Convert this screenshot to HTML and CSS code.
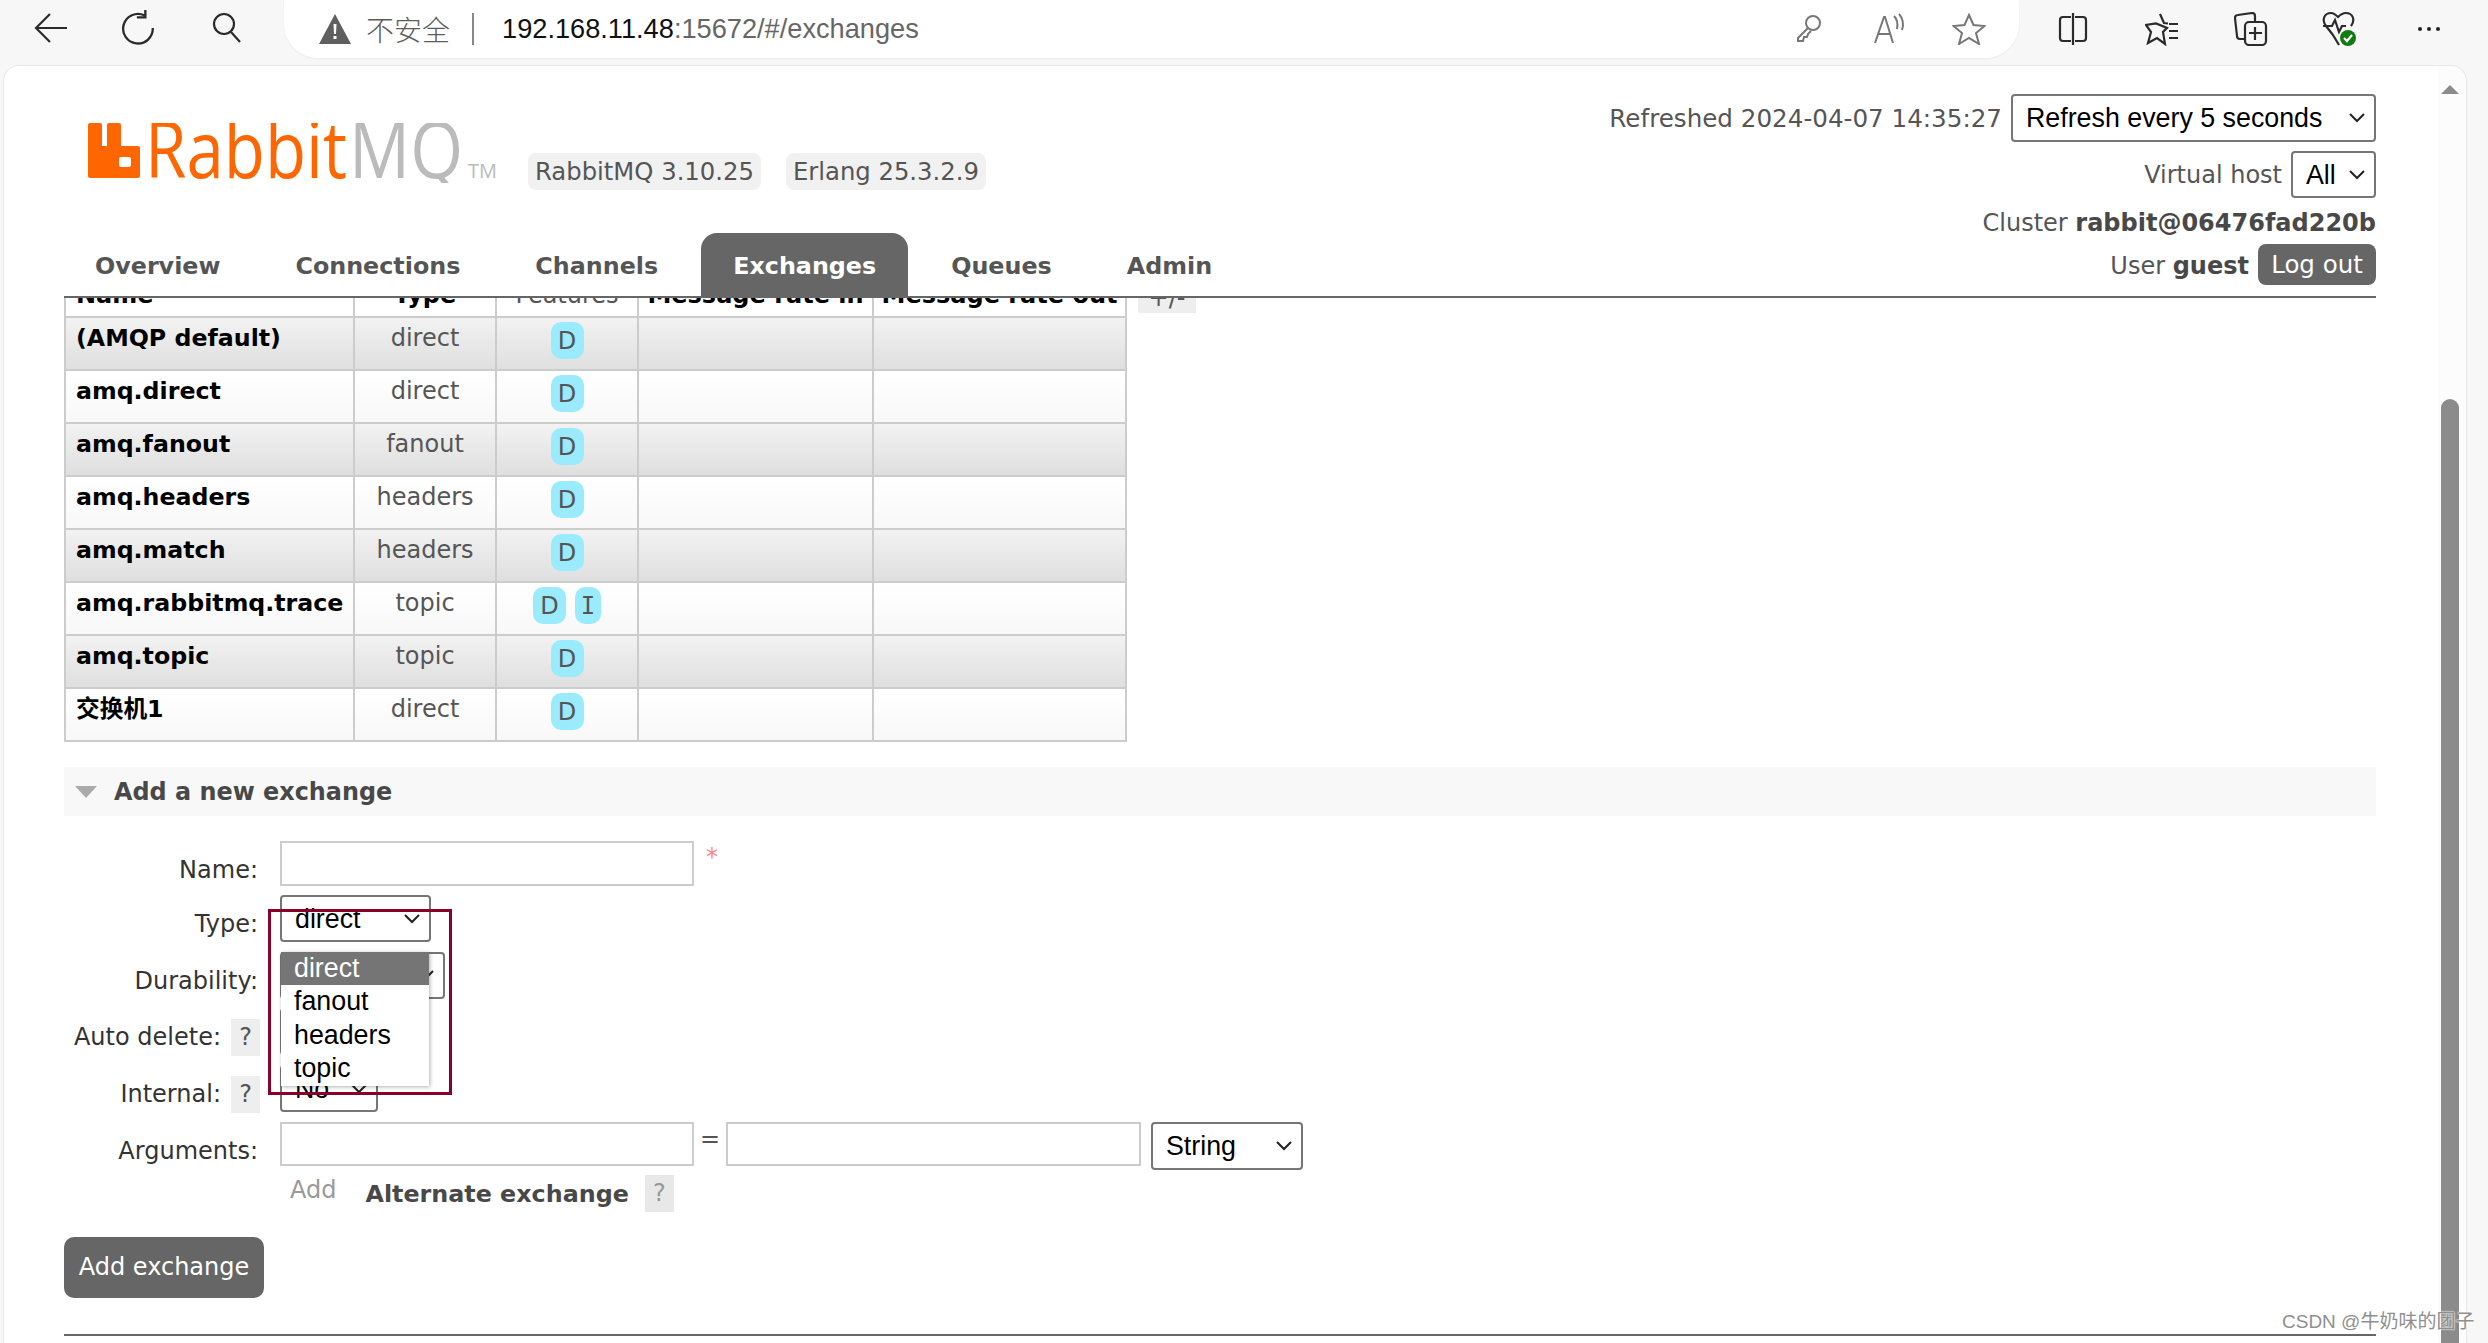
FILE: index.html
```html
<!DOCTYPE html>
<html lang="zh">
<head>
<meta charset="utf-8">
<title>RabbitMQ Management</title>
<link rel="stylesheet" href="styles.css">
</head>
<body>
<div class="browser">
  <div class="toolbar">
    <div class="nav">
      <span class="slot"><svg width="34" height="34" viewBox="0 0 34 34" class="ico"><path d="M33 17H2M16 3 2 17 16 31"/></svg></span>
      <span class="slot"><svg width="36" height="36" viewBox="0 0 34 34" class="ico"><path d="M22 5A14 14 0 1 0 30 17M23 0v7h-8" /></svg></span>
      <span class="slot"><svg width="32" height="32" viewBox="0 0 32 32" class="ico"><circle cx="13" cy="12" r="10"/><path d="M20 20l9 10"/></svg></span>
    </div>
    <div class="addr">
      <svg width="32" height="30" viewBox="0 0 32 30"><path d="M16 0 32 30H0Z" fill="#5f5f5f"/><path d="M14.500 10h3l-.5 10h-2zM14.500 22h3v3h-3z" fill="#fff"/></svg>
      <span class="insecure">不安全</span>
      <span class="sep"></span>
      <span class="url">192.168.11.48<span class="url-rest">:15672/#/exchanges</span></span>
      <span class="addr-tools">
        <span class="slot-s"><svg width="30" height="30" viewBox="0 0 30 30" class="ico ico-g"><circle cx="19" cy="10" r="7"/><path d="M14 15 4 25v3h5l1-4h3l1-3 3-3"/></svg></span>
        <span class="slot-s"><svg width="34" height="32" viewBox="0 0 34 32" class="ico ico-g"><path d="M3 30 12 4h1l8 26M6 21h13M22 3c3 3 4 8 3 13M27 1c4 4 5 11 3 16"/></svg></span>
        <span class="slot-s"><svg width="34" height="32" viewBox="0 0 34 32" class="ico ico-g"><path d="M17 2l4.500 10 11 1-8.500 7 3 11-10-6-10 6 3-11-8.500-7 11-1z"/></svg></span>
      </span>
    </div>
    <div class="tools">
      <span class="slot-t"><svg width="32" height="32" viewBox="0 0 32 32" class="ico"><path d="M14 4H6a3 3 0 0 0-3 3v18a3 3 0 0 0 3 3h8M18 4h8a3 3 0 0 1 3 3v18a3 3 0 0 1-3 3h-8M16 0v32"/></svg></span>
      <span class="slot-t"><svg width="34" height="34" viewBox="0 0 34 34" class="ico"><path d="M15 2l4 9 4 .5M22 16l-4 4 2 12-8-6-9 5 3-11L1 13l10-1.500zM24 12h9M24 19h9M24 26h9"/></svg></span>
      <span class="slot-t"><svg width="34" height="34" viewBox="0 0 34 34" class="ico"><path d="M10 27H6a3 3 0 0 1-3-3L1 6a3 3 0 0 1 3-3l14-2a3 3 0 0 1 3 3v5"/><rect x="11" y="10" width="21" height="23" rx="4"/><path d="M21 15v13M15 21h13"/></svg></span>
      <span class="slot-t"><svg width="36" height="36" viewBox="0 0 36 36" class="ico"><path d="M11 24 4 15C-1 8 3 2 9 2c3 0 5 2 7 4 2-2 4-4 8-4 6 0 10 6 5 13M1 15h9l3-6 4 12 3-6h4M11 24l6 10"/><circle cx="26" cy="27" r="8" fill="#107c10" stroke="none"/><path d="M22 27l3 3 5-6" stroke="#fff"/></svg></span>
      <span class="slot-t dots"><i></i><i></i><i></i></span>
    </div>
  </div>

  <div class="card">
    <div class="main">
      <header class="header">
        <div class="header-left">
          <div class="brand">
            <svg class="logo" width="412" height="60" viewBox="0 0 412 60">
              <path fill="#f60" fill-rule="evenodd" d="M2 0h10a2 2 0 0 1 2 2v21h5V2a2 2 0 0 1 2-2h10a2 2 0 0 1 2 2v21h17a2 2 0 0 1 2 2v28a2 2 0 0 1-2 2H2a2 2 0 0 1-2-2V2a2 2 0 0 1 2-2zM33 34a2 2 0 0 0-2 2v6a2 2 0 0 0 2 2h8a2 2 0 0 0 2-2v-6a2 2 0 0 0-2-2z"/>
              <text class="logo-t logo-o" x="57" y="55" textLength="202" lengthAdjust="spacingAndGlyphs">Rabbit</text>
              <text class="logo-t logo-g" x="261" y="55" textLength="114" lengthAdjust="spacingAndGlyphs">MQ</text>
              <text class="logo-tm" x="380" y="55" textLength="29" lengthAdjust="spacingAndGlyphs">TM</text>
            </svg>
            <span class="pill pill-a">RabbitMQ 3.10.25</span>
            <span class="pill">Erlang 25.3.2.9</span>
          </div>
          <nav class="tabs">
            <a class="tab">Overview</a>
            <a class="tab">Connections</a>
            <a class="tab">Channels</a>
            <a class="tab active">Exchanges</a>
            <a class="tab">Queues</a>
            <a class="tab">Admin</a>
          </nav>
        </div>
        <div class="header-right">
          <div class="hr-row hr-1"><span class="refreshed">Refreshed 2024-04-07 14:35:27</span><select class="sel sel-refresh"><option>Refresh every 5 seconds</option></select></div>
          <div class="hr-row hr-2"><span>Virtual host</span><select class="sel sel-vhost"><option>All</option></select></div>
          <div class="hr-row hr-3">Cluster&nbsp;<b>rabbit@06476fad220b</b></div>
          <div class="hr-row hr-4"><span class="user">User&nbsp;<b>guest</b></span><button class="logout">Log out</button></div>
        </div>
      </header>

      <div class="scroll">
        <div class="table-wrap">
          <table class="list">
            <colgroup><col class="c1"><col class="c2"><col class="c3"><col class="c4"><col class="c5"></colgroup>
            <thead>
              <tr><th class="l">Name</th><th>Type</th><th class="fh">Features</th><th>Message rate in</th><th>Message rate out</th></tr>
            </thead>
            <tbody>
              <tr class="odd"><td class="l">(AMQP default)</td><td>direct</td><td class="f"><span class="bdg">D</span></td><td></td><td></td></tr>
              <tr class="even"><td class="l">amq.direct</td><td>direct</td><td class="f"><span class="bdg">D</span></td><td></td><td></td></tr>
              <tr class="odd"><td class="l">amq.fanout</td><td>fanout</td><td class="f"><span class="bdg">D</span></td><td></td><td></td></tr>
              <tr class="even"><td class="l">amq.headers</td><td>headers</td><td class="f"><span class="bdg">D</span></td><td></td><td></td></tr>
              <tr class="odd"><td class="l">amq.match</td><td>headers</td><td class="f"><span class="bdg">D</span></td><td></td><td></td></tr>
              <tr class="even"><td class="l">amq.rabbitmq.trace</td><td>topic</td><td class="f"><span class="bdg">D</span><span class="bdg bdg-i">I</span></td><td></td><td></td></tr>
              <tr class="odd"><td class="l">amq.topic</td><td>topic</td><td class="f"><span class="bdg">D</span></td><td></td><td></td></tr>
              <tr class="even"><td class="l">交换机1</td><td>direct</td><td class="f"><span class="bdg">D</span></td><td></td><td></td></tr>
            </tbody>
          </table>
          <span class="plus">+/-</span>
        </div>

        <h2 class="section"><i class="tri"></i>Add a new exchange</h2>

        <form class="form">
          <label class="lb">Name:</label>
          <div class="ctl"><input class="inp" type="text"><span class="star">*</span></div>
          <label class="lb">Type:</label>
          <div class="ctl"><select class="sel sel-type"><option>direct</option></select></div>
          <label class="lb">Durability:</label>
          <div class="ctl"><select class="sel sel-dur"><option>Durable</option></select></div>
          <label class="lb">Auto delete:<span class="q">?</span></label>
          <div class="ctl"><select class="sel sel-no"><option>No</option></select></div>
          <label class="lb">Internal:<span class="q">?</span></label>
          <div class="ctl"><select class="sel sel-no"><option>No</option></select></div>
          <label class="lb">Arguments:</label>
          <div class="ctl ctl-args">
            <div class="args">
              <input class="inp" type="text"><span class="eq">=</span><input class="inp inp-2" type="text">
              <select class="sel sel-string"><option>String</option></select>
            </div>
            <div class="add-row"><span class="add">Add</span><b class="alt">Alternate exchange</b><span class="q q-dim">?</span></div>
          </div>

          <div class="dropdown">
            <div class="opt opt-on">direct</div>
            <div class="opt">fanout</div>
            <div class="opt">headers</div>
            <div class="opt">topic</div>
          </div>
          <div class="redbox"></div>
        </form>

        <button class="add-btn">Add exchange</button>
        <div class="rule"></div>
      </div>
    </div>
    <div class="track">
      <i class="arrow"></i>
      <i class="thumb"></i>
    </div>
  </div>
  <div class="watermark">CSDN @牛奶味的团子</div>
</div>
</body>
</html>
```
FILE: styles.css
```css
* { box-sizing: border-box; }
html, body { margin: 0; padding: 0; height: 100%; overflow: hidden; }
body { background: #f7f7f7; font-family: "DejaVu Sans", "Noto Sans CJK SC", sans-serif; font-size: 24px; color: #484848; }
.browser { position: relative; height: 1343px; display: flex; flex-direction: column; }

/* browser chrome */
.toolbar { height: 65px; display: flex; align-items: flex-start; flex: none; }
.nav { display: flex; padding-left: 7px; width: 284px; }
.slot { width: 88px; height: 56px; display: flex; align-items: center; justify-content: center; }
.ico { fill: none; stroke: #2b2b2b; stroke-width: 2.2; }
.ico-g { stroke: #777; stroke-width: 2; }
.addr { width: 1735px; height: 58px; background: #fff; border-radius: 0 0 34px 34px; display: flex; align-items: center; padding: 0 10px 0 35px; box-shadow: 0 1px 2px rgba(0,0,0,.05); font-family: "Liberation Sans", "Noto Sans CJK SC", sans-serif; }
.insecure { margin-left: 15px; font-size: 28px; color: #5c5c5c; font-family: "Noto Sans CJK SC", sans-serif; font-weight: 300; }
.sep { width: 2px; height: 32px; background: #888; margin: 0 28px 0 22px; }
.url { font-size: 27.200px; color: #111; }
.url-rest { color: #666; }
.addr-tools { margin-left: auto; display: flex; }
.slot-s { width: 80px; display: flex; justify-content: center; }
.tools { display: flex; margin-left: 9px; padding-top: 11px; }
.slot-t { width: 89px; height: 36px; display: flex; align-items: center; justify-content: center; }
.dots { gap: 5px; }
.dots i { width: 4px; height: 4px; border-radius: 50%; background: #222; }

/* card */
.card { margin-left: 3px; width: 2464px; flex: 1; min-height: 0; display: flex; background: #fff; border: 1px solid #e8e8e8; border-bottom: 0; border-radius: 16px 16px 0 0; }
.main { flex: 1; min-width: 0; padding: 0 62px 0 60px; display: flex; flex-direction: column; }
.track { width: 28px; flex: none; background: #fcfcfc; display: flex; flex-direction: column; align-items: center; border-top-right-radius: 16px; padding-right: 5px; }
.arrow { margin-top: 19px; width: 0; height: 0; border: 9px solid transparent; border-top: 0; border-bottom-color: #8b8b8b; }
.thumb { margin-top: 305px; width: 18px; flex: 1; background: #8b8b8b; border-radius: 9px 9px 0 0; }

/* header */
.header { height: 232px; flex: none; display: flex; justify-content: space-between; border-bottom: 2px solid #666; }
.header-left { display: flex; flex-direction: column; justify-content: space-between; }
.brand { display: flex; align-items: flex-start; padding: 57px 0 0 24px; }
.logo { flex: none; display: block; }
.logo-t { font-family: "Open Sans", sans-serif; font-weight: 400; font-size: 78px; }
.logo-o { fill: #f60; }
.logo-g { fill: #bbb; }
.logo-tm { font-family: "Open Sans", sans-serif; font-size: 20px; fill: #bbb; }
.pill { margin-top: 30px; height: 37px; line-height: 38px; padding: 0 7px; background: #f1f1f1; border-radius: 8px; color: #555; white-space: nowrap; margin-left: 25px; font-size: 24.300px; }
.pill-a { margin-left: 28px; }
.tabs { display: flex; gap: 11px; margin-left: -1px; }
.tab { height: 63px; padding: 18px 32px 0; font-weight: bold; font-size: 23.800px; color: #555; border-radius: 16px 16px 0 0; line-height: 30px; }
.tab.active { background: #666; color: #fff; }

.header-right { display: flex; flex-direction: column; align-items: flex-end; padding-top: 28px; }
.hr-row { display: flex; align-items: center; justify-content: flex-end; white-space: nowrap; color: #555; }
.hr-row b { color: #484848; }
.refreshed { font-size: 24.600px; }
.hr-1 { height: 48px; gap: 9px; }
.hr-2 { height: 47px; margin-top: 9px; gap: 9px; }
.hr-3 { height: 30px; margin-top: 10px; }
.hr-4 { height: 41px; margin-top: 6px; }
.user { padding-top: 2px; }
.sel { appearance: none; font-family: "Liberation Sans", sans-serif; font-size: 26.800px; color: #000; background: #fff url("data:image/svg+xml,%3Csvg xmlns='http://www.w3.org/2000/svg' width='16' height='10'%3E%3Cpath d='M1 1l7 7 7-7' fill='none' stroke='%23222' stroke-width='2'/%3E%3C/svg%3E") no-repeat right 9px center; border: 2px solid #767676; border-radius: 4px; padding: 0 0 0 13px; height: 47px; margin: 0; }
.sel-refresh { width: 365px; height: 48px; }
.sel-vhost { width: 85px; }
.logout { margin-left: 9px; width: 118px; height: 41px; border: 0; border-radius: 8px; background: #666; color: #fff; font: inherit; font-size: 24.500px; padding: 0; }

/* table */
.scroll { flex: 1; min-height: 0; overflow: hidden; }
.table-wrap { display: flex; align-items: flex-start; gap: 11px; margin-top: -35px; }
.list { border-collapse: collapse; table-layout: fixed; width: 1061px; flex: none; }
.c1 { width: 289px; } .c2 { width: 142px; } .c3 { width: 142px; } .c4 { width: 235px; } .c5 { width: 253px; }
.list th, .list td { border: 2px solid #ccc; text-align: center; vertical-align: top; white-space: nowrap; }
.list th { height: 53px; padding: 15px 0 0; color: #000; line-height: 30px; }
.list th.l { text-align: left; padding-left: 10px; }
.list th.fh { font-weight: normal; color: #555; }
.list td { height: 53px; padding: 5px 0 0; line-height: 30px; color: #555; }
.list td.l { text-align: left; padding-left: 10px; font-weight: bold; color: #000; font-size: 23.700px; }
.list td.f { padding-top: 4px; font-size: 0; }
.odd td { background: linear-gradient(#f2f2f2, #dfdfdf); }
.even td { background: linear-gradient(#fff, #f8f8f8); }
.bdg { display: inline-block; width: 33px; height: 37px; line-height: 38px; background: #9bebff; border-radius: 10px; font-size: 24px; color: #555; text-align: center; }
.bdg-i { width: 26px; margin-left: 9px; font-family: "DejaVu Sans Mono", monospace; }
.plus { width: 58px; height: 50px; background: #eee; text-align: center; line-height: 70px; color: #555; overflow: hidden; flex: none; }

/* section */
.section { margin: 25px 0 0; height: 49px; background: #f8f8f8; display: flex; align-items: center; padding-left: 11px; font-size: 23.900px; font-weight: bold; color: #484848; }
.tri { width: 0; height: 0; border: 11px solid transparent; border-bottom: 0; border-top: 12px solid #aaa; margin-right: 17px; }

/* form */
.form { position: relative; margin-top: 25px; display: grid; grid-template-columns: 216px 1fr; grid-template-rows: 44.5px 47px 47px 47.5px 47px auto; row-gap: 9.500px; }
.lb { display: flex; justify-content: flex-end; align-items: flex-start; padding: 14px 22px 0 0; line-height: 30px; color: #333; white-space: nowrap; }
.ctl { display: flex; align-items: flex-start; }
.ctl-args { flex-direction: column; }
.inp { width: 414px; height: 44.500px; border: 2px solid #ccc; background: #fff; padding: 0; margin: 0; }
.inp-2 { width: 415px; }
.star { color: #f88; margin-left: 12px; line-height: 32px; }
.sel-type { width: 151px; }
.sel-dur { width: 165px; }
.sel-no { width: 98px; }
.sel-string { width: 152px; height: 48px; margin-left: 10px; }
.q { width: 29px; height: 37px; line-height: 37px; background: #eee; text-align: center; margin: -3px -2px 0 10px; flex: none; color: #555; }
.q-dim { margin: 0 0 0 16px; color: #999; background: #e8e8e8; }
.args { display: flex; align-items: flex-start; }
.eq { width: 32px; text-align: center; line-height: 34px; color: #555; }
.add-row { display: flex; align-items: flex-start; margin-top: 5px; padding-left: 10px; line-height: 30px; height: 37px; }
.add { color: #999; }
.alt { margin-left: 29px; margin-top: 4px; color: #484848; font-size: 23.800px; }

.dropdown { position: absolute; left: 217px; top: 111px; width: 148px; height: 134px; background: #fff; box-shadow: 1px 1px 4px rgba(0,0,0,.3); font-family: "Liberation Sans", sans-serif; font-size: 26.800px; color: #000; }
.opt { height: 33.300px; line-height: 33px; padding-left: 13px; }
.opt-on { background: #757575; color: #fff; }
.redbox { position: absolute; left: 204px; top: 68px; width: 184px; height: 186px; border: 3px solid #8a0028; pointer-events: none; }

.add-btn { display: block; margin-top: 25px; width: 200px; height: 61px; border: 0; border-radius: 10px; background: #666; color: #fff; font: inherit; padding: 0; }
.rule { margin-top: 36px; height: 2px; background: #666; }

.watermark { position: absolute; left: 2282px; top: 1306px; font-family: "Liberation Sans", "Noto Sans CJK SC", sans-serif; font-size: 19px; color: #8f8f8f; text-shadow: 0 0 2px #fff, 0 0 2px #fff; white-space: nowrap; }
```
